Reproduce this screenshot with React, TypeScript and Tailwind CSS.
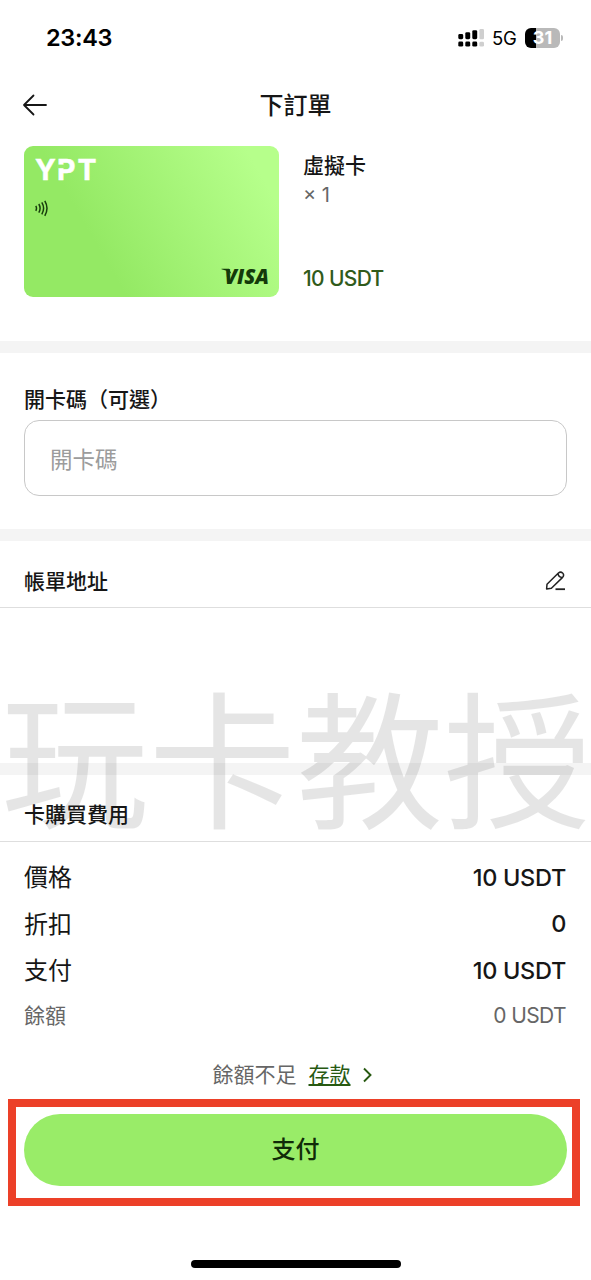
interface FeeRow {
  label: string;
  value: string;
}

const feeRows: FeeRow[] = [
  { label: '價格', value: '10 USDT' },
  { label: '折扣', value: '0' },
  { label: '支付', value: '10 USDT' },
];

function StatusBar() {
  return (
    <div className="flex h-[76px] items-center justify-between pl-[46px] pr-[28px] text-black">
      <span className="text-[23.5px] font-semibold leading-none tracking-[-0.3px]">23:43</span>
      <div className="flex items-center">
        <svg width="27" height="18" viewBox="0 0 27 18">
          <g fill="#000">
            <rect x="0.3" y="5" width="4.9" height="5.2" rx="1.4" />
            <rect x="7.3" y="3.2" width="4.9" height="7" rx="1.4" />
            <rect x="14.3" y="1.2" width="4.9" height="9" rx="1.4" />
            <rect x="0.3" y="12.6" width="4.9" height="5" rx="1.4" />
            <rect x="7.3" y="12.6" width="4.9" height="5" rx="1.4" />
            <rect x="14.3" y="12.6" width="4.9" height="5" rx="1.4" />
          </g>
          <g fill="#cfcfcf">
            <rect x="21.4" y="0" width="4.6" height="10.2" rx="1.2" />
            <rect x="21.4" y="12.8" width="4.6" height="4.8" rx="1.4" />
          </g>
        </svg>
        <span className="ml-[7px] w-[26px] text-[18.5px] leading-none tracking-[-0.2px]">5G</span>
        <div className="ml-[7px] flex h-[20px] w-[35px] items-center justify-center rounded-[6px] bg-linear-to-r from-black from-[31%] to-[#b9b9b9] to-[31%] text-[18px] font-bold leading-none text-white">
          31
        </div>
        <div className="ml-px h-[6px] w-[2px] rounded-r-full bg-[#b9b9b9]" />
      </div>
    </div>
  );
}

function VirtualCard() {
  return (
    <div className="flex h-[151px] w-[255px] flex-col justify-between rounded-[9px] bg-linear-[60deg] from-[#94e964] from-30% to-[#b6ff8b] to-90%">
      <div className="pl-[11px] pt-[13px]">
        <svg className="overflow-visible" width="64" height="22" viewBox="0 0 64 22">
          <text x="0 22 42.5" y="21" fill="#fff" stroke="#fff" strokeWidth="0.5" className="font-[Inter] text-[28.5px] font-bold">
            YPT
          </text>
          {/* stencil cut in the P */}
          <path d="M22 5.6h8v3.6H22z" fill="#99ec6a" />
        </svg>
        <svg className="mt-[19px]" width="14" height="17" viewBox="0 0 14 17" fill="none" stroke="#173d0c" strokeWidth="1.5">
          <path d="M0.8 5.8q1.4 2.5 0 5M3.8 4q2.6 4.2 0 8.6M6.8 2.3q3.6 6 0 12M9.8 0.8q4.4 7.4 0 15" />
        </svg>
      </div>
      <div className="flex justify-end pb-[12px] pr-[9px]">
        <svg className="overflow-visible" width="49" height="17" viewBox="0 0 49 17">
          <path d="M0.5 0.8H8l2.4 5Q6 2 0.5 1.3z" fill="#143a0a" />
          <text x="3.5" y="16" textLength="44.5" lengthAdjust="spacingAndGlyphs" fill="#143a0a" className="font-['Open_Sans'] text-[21px] font-extrabold italic">
            VISA
          </text>
        </svg>
      </div>
    </div>
  );
}

function Divider() {
  return <div className="h-3 bg-[#f4f4f4]" />;
}

export default function App() {
  return (
    <div className="relative isolate h-[1280px] w-[591px] overflow-hidden bg-white font-[Inter,'Noto_Sans_CJK_TC',sans-serif] text-[#161616]">
      {/* Watermark */}
      <div className="pointer-events-none absolute left-[1px] top-[679px] z-10 whitespace-nowrap font-['Noto_Sans_CJK_SC',sans-serif] text-[147.5px] leading-[148px] text-black/10">
        玩卡教授
      </div>

      <StatusBar />

      <header className="grid h-[58px] grid-cols-[48px_1fr_48px] items-center">
        <svg className="ml-[22px]" width="26" height="22" viewBox="0 0 26 22" fill="none" stroke="#161616" strokeWidth="1.8" strokeLinecap="round" strokeLinejoin="round">
          <path d="M24 11H2M11.5 1.5L2 11l9.5 9.5" />
        </svg>
        <h1 className="pt-[2px] text-center text-[24px] font-medium leading-none">下訂單</h1>
      </header>

      <section className="flex h-[207px] px-6 pt-3">
        <VirtualCard />
        <div className="ml-6 flex h-[151px] flex-col">
          <div className="mt-[5px] text-[21px] font-medium leading-[30px]">虛擬卡</div>
          <div className="text-[20px] leading-[29px] text-[#666]">× 1</div>
          <div className="mt-auto pb-[4px] text-[21px] font-medium leading-[28px] tracking-[-0.65px] text-[#315b1b]">10 USDT</div>
        </div>
      </section>

      <Divider />

      <section className="h-[176px] px-6 pt-[32px]">
        <label className="block h-[35px] text-[21px] font-medium leading-[30px]">開卡碼（可選）</label>
        <input
          className="h-[76px] w-[543px] rounded-[15px] border-[1.5px] border-[#c8c8c8] px-[25px] pt-[2px] text-[22.5px] outline-none placeholder:text-[#9c9c9c]"
          placeholder="開卡碼"
        />
      </section>

      <Divider />

      <section className="h-[222px]">
        <div className="flex h-[67px] items-center justify-between border-b border-[#dedede] px-6 pt-[14px]">
          <h2 className="text-[21px] font-medium leading-none">帳單地址</h2>
          <svg className="mr-px" width="21" height="20" viewBox="0 0 21 20" fill="none" stroke="#222" strokeWidth="1.5" strokeLinejoin="round">
            <path d="M1.6 18L2 13.2 13.4 2q2.2-1.8 4.2 0t0 4.4L6.4 17.2zM13 2.6q.4 3.4 4.2 3.9" />
            <path d="M10.5 18.2H20" strokeWidth="1.8" />
          </svg>
        </div>
      </section>

      <Divider />

      <section>
        <div className="flex h-[67px] items-center border-b border-[#dedede] px-6 pt-[13px]">
          <h2 className="relative z-20 text-[21px] font-medium leading-none">卡購買費用</h2>
        </div>
        <div className="px-6 pt-[13px]">
          {feeRows.map((row) => (
            <div key={row.label} className="flex h-[46.5px] items-center justify-between text-[24px] leading-none">
              <span>{row.label}</span>
              <span className="mr-px pb-[2px] text-[23.5px] font-medium tracking-[-0.3px]">{row.value}</span>
            </div>
          ))}
          <div className="flex h-[42px] items-center justify-between text-[21px] leading-none text-[#666]">
            <span>餘額</span>
            <span className="mr-px tracking-[-0.6px]">0 USDT</span>
          </div>
        </div>
      </section>

      <div className="flex h-[62px] items-center justify-center pr-[7px] pt-[14px] text-[21px] leading-none text-[#666]">
        餘額不足
        <a className="ml-3 text-[#275911] underline decoration-[1.5px] underline-offset-[2px]">存款</a>
        <svg className="ml-3" width="9" height="16" viewBox="0 0 9 16" fill="none" stroke="#275911" strokeWidth="1.9">
          <path d="M1 1.5L7.5 8 1 14.5" />
        </svg>
      </div>

      <div className="ml-2 h-[107px] w-[572px] border-8 border-[#ec4028] px-2 pt-[7px]">
        <button className="block h-[72px] w-[543px] rounded-full bg-[#99ec68] text-[24px] font-medium leading-none text-[#102b08]">
          支付
        </button>
      </div>

      <div className="mx-auto mt-[54px] h-2 w-[210px] rounded-full bg-black" />
    </div>
  );
}
